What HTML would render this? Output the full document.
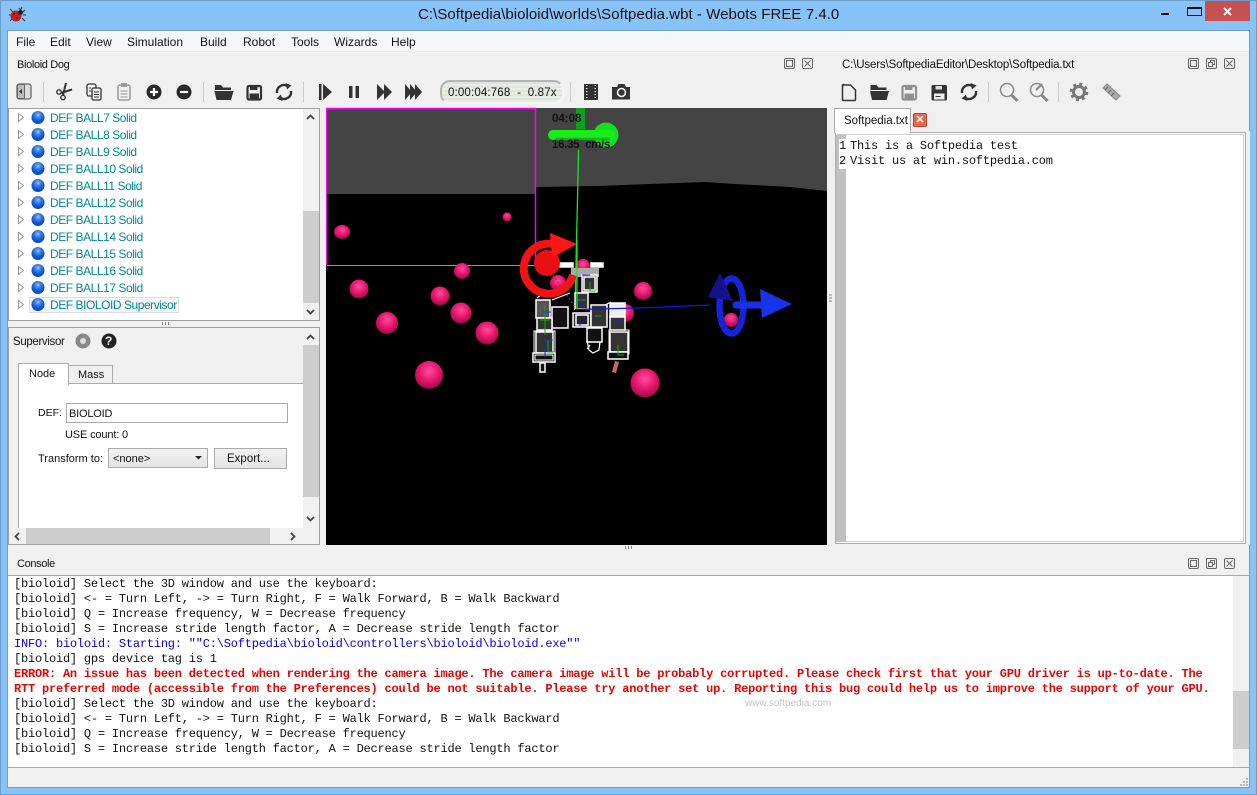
<!DOCTYPE html>
<html><head><meta charset="utf-8"><title>Webots</title>
<style>
html,body{margin:0;padding:0;background:#88c3f8;}
#w{position:relative;width:1257px;height:795px;overflow:hidden;background:#88c3f8;font-family:"Liberation Sans",sans-serif;font-size:12px;color:#111;}
.b{position:absolute;box-sizing:border-box;}
.t{position:absolute;white-space:nowrap;line-height:16px;height:16px;}
.tree{color:#00899a;letter-spacing:-.45px;}
.hd{font-size:11px;letter-spacing:-.35px;}
pre{margin:0;font-family:"Liberation Mono",monospace;font-size:12px;letter-spacing:-.21px;line-height:15px;position:absolute;white-space:pre;color:#111;}
svg{position:absolute;left:0;top:0;}
</style></head><body><div id="w">
<div class="b" style="left:0;top:0;width:1257px;height:795px;border:1px solid #6d9ecb;"></div>
<div class="b" style="left:7px;top:30px;width:1243px;height:758px;background:#f0f0f0;border:1px solid #6f9fcc;"></div>
<div class="b" style="left:8px;top:31px;width:1241px;height:21px;background:#f5f6f7;border-bottom:1px solid #e8e8e8;"></div>
<div class="b" style="left:1205px;top:1px;width:45px;height:20px;background:#c75050;"></div>
<div class="t" style="left:418px;top:7px;font-size:15px;letter-spacing:.05px;color:#111;">C:\Softpedia\bioloid\worlds\Softpedia.wbt - Webots FREE 7.4.0</div>

<div class="t" style="left:16px;top:34px;">File</div>
<div class="t" style="left:50px;top:34px;">Edit</div>
<div class="t" style="left:86px;top:34px;">View</div>
<div class="t" style="left:127px;top:34px;">Simulation</div>
<div class="t" style="left:200px;top:34px;">Build</div>
<div class="t" style="left:243px;top:34px;">Robot</div>
<div class="t" style="left:291px;top:34px;">Tools</div>
<div class="t" style="left:334px;top:34px;">Wizards</div>
<div class="t" style="left:391px;top:34px;">Help</div>

<div class="t hd" style="left:17px;top:57px;">Bioloid Dog</div>
<div class="t" style="left:842px;top:57px;font-size:11.5px;letter-spacing:-.15px;">C:\Users\SoftpediaEditor\Desktop\Softpedia.txt</div>
<div class="t hd" style="left:17px;top:556px;">Console</div>

<!-- tree -->
<div class="b" style="left:8px;top:108px;width:312px;height:213px;background:#fff;border:1px solid #a0a0a0;"></div>
<div class="b" style="left:303px;top:109px;width:16px;height:211px;background:#f0f0f0;"></div>
<div class="b" style="left:303px;top:211px;width:16px;height:92px;background:#cdcdcd;"></div>
<div class="b" style="left:29px;top:297px;width:150px;height:16px;background:#f6f6f6;border:1px solid #ddd;"></div>
<div class="t tree" style="left:50px;top:110px;">DEF BALL7 Solid</div>
<div class="t tree" style="left:50px;top:127px;">DEF BALL8 Solid</div>
<div class="t tree" style="left:50px;top:144px;">DEF BALL9 Solid</div>
<div class="t tree" style="left:50px;top:161px;">DEF BALL10 Solid</div>
<div class="t tree" style="left:50px;top:178px;">DEF BALL11 Solid</div>
<div class="t tree" style="left:50px;top:195px;">DEF BALL12 Solid</div>
<div class="t tree" style="left:50px;top:212px;">DEF BALL13 Solid</div>
<div class="t tree" style="left:50px;top:229px;">DEF BALL14 Solid</div>
<div class="t tree" style="left:50px;top:246px;">DEF BALL15 Solid</div>
<div class="t tree" style="left:50px;top:263px;">DEF BALL16 Solid</div>
<div class="t tree" style="left:50px;top:280px;">DEF BALL17 Solid</div>
<div class="t tree" style="left:50px;top:297px;">DEF BIOLOID Supervisor</div>

<!-- supervisor -->
<div class="b" style="left:8px;top:327px;width:312px;height:218px;background:#f0f0f0;border:1px solid #a0a0a0;"></div>
<div class="t" style="left:13px;top:334px;font-size:11.5px;letter-spacing:-.35px;">Supervisor</div>
<div class="b" style="left:18px;top:383px;width:285px;height:145px;background:#fff;border-left:1px solid #aaa;border-top:1px solid #aaa;"></div>
<div class="b" style="left:68px;top:365px;width:45px;height:19px;background:#f0f0f0;border:1px solid #aaa;"></div>
<div class="b" style="left:18px;top:363px;width:51px;height:22px;background:#fff;border:1px solid #aaa;border-bottom:none;"></div>
<div class="t" style="left:29px;top:366px;font-size:11px;">Node</div>
<div class="t" style="left:78px;top:367px;font-size:11px;">Mass</div>
<div class="t" style="left:38px;top:405px;font-size:10.5px;">DEF:</div>
<div class="b" style="left:66px;top:403px;width:222px;height:20px;background:#fff;border:1px solid #aaa;"></div>
<div class="t" style="left:69px;top:406px;font-size:11px;letter-spacing:-.2px;">BIOLOID</div>
<div class="t" style="left:65px;top:427px;font-size:11px;letter-spacing:-.15px;">USE count: 0</div>
<div class="t" style="left:38px;top:451px;font-size:11px;">Transform to:</div>
<div class="b" style="left:108px;top:448px;width:100px;height:20px;background:linear-gradient(#f2f2f2,#e4e4e4);border:1px solid #aaa;"></div>
<div class="t" style="left:113px;top:451px;font-size:11px;">&lt;none&gt;</div>
<div class="b" style="left:214px;top:448px;width:73px;height:21px;background:linear-gradient(#f2f2f2,#e4e4e4);border:1px solid #aaa;"></div>
<div class="t" style="left:227px;top:451px;font-size:11.5px;">Export...</div>
<div class="b" style="left:303px;top:328px;width:16px;height:200px;background:#f0f0f0;"></div>
<div class="b" style="left:303px;top:345px;width:16px;height:152px;background:#cdcdcd;"></div>
<div class="b" style="left:9px;top:528px;width:310px;height:16px;background:#f0f0f0;"></div>
<div class="b" style="left:26px;top:528px;width:244px;height:16px;background:#cdcdcd;"></div>

<!-- 3D view -->
<svg width="1257" height="795" viewBox="0 0 1257 795">
<defs>
<radialGradient id="p" cx=".5" cy=".36" r=".68"><stop offset="0" stop-color="#ff4f9c"/><stop offset=".5" stop-color="#e8176e"/><stop offset=".85" stop-color="#b00c50"/><stop offset="1" stop-color="#6a0a30"/></radialGradient>
<radialGradient id="bb" cx=".5" cy=".3" r=".75"><stop offset="0" stop-color="#9cc4f2"/><stop offset=".3" stop-color="#3d7fe0"/><stop offset=".65" stop-color="#0a56d8"/><stop offset="1" stop-color="#0a3fa8"/></radialGradient>
<g id="row"><path d="M18.500 -4v8l5-4z" fill="#fff" stroke="#999"/><circle cx="38" cy="0" r="6.500" fill="url(#bb)"/></g>
<g id="rel"><path d="M-7 1A7 7 0 0 1 3.500-6" fill="none" stroke="#333" stroke-width="2.400"/><path d="M1.500-9L7.500-6.500 3-2.500z" fill="#333"/><path d="M7-1A7 7 0 0 1-3.500 6" fill="none" stroke="#333" stroke-width="2.400"/><path d="M-1.500 9L-7.500 6.500-3 2.500z" fill="#333"/></g>
<g id="fold"><path d="M-9-7.500h6l2 2.500h8v2.500h-16z" fill="#333"/><path d="M-9.500-1.500h19l-2.500 9h-14.500z" fill="#333"/></g>
<g id="sv"><rect x="-6.500" y="-6.500" width="13.500" height="13.500" rx="1.500" fill="none" stroke="#333" stroke-width="2.200"/><path d="M-4-7h7.500v4.500h-7.500z" fill="#333"/><path d="M-4.500 1h9.500v6h-9.500z" fill="#333"/></g>
<g id="sv2"><rect x="-7.500" y="-7.500" width="15.500" height="15.500" rx="1.500" fill="#333"/><rect x="-3.500" y="-6.500" width="6.500" height="3.500" fill="#ddd"/><rect x="-5" y="1" width="10.500" height="6" fill="#eee"/><path d="M-3.500 4h5" stroke="#333"/></g>
<g id="d1"><rect x="-5" y="-5" width="10" height="10" rx="1.500" fill="none" stroke="#666"/><rect x="-3" y="-3" width="6" height="6" fill="none" stroke="#666"/></g>
<g id="d2"><rect x="-5" y="-5" width="10" height="10" rx="1.500" fill="none" stroke="#666"/><rect x="-1" y="-3" width="4" height="4" fill="none" stroke="#666"/><rect x="-3" y="-1" width="4" height="4" fill="#f0f0f0" stroke="#666"/></g>
<g id="d3"><rect x="-5" y="-5" width="10" height="10" rx="1.500" fill="none" stroke="#666"/><path d="M-3-3L3 3M3-3L-3 3" stroke="#666"/></g>
</defs>

<rect x="326" y="108" width="501" height="437" fill="#000"/>
<path d="M326 108H827V191L790 187 735 184 705 182 650 184 600 186 535 187V194H326Z" fill="#444"/>
<path d="M327 265.500H535" stroke="#d6d" stroke-width="1"/>
<path d="M326 108.500H535.500V265" fill="none" stroke="#f0f" stroke-width="1.500"/>
<path d="M326.500 108V265" stroke="#f0f" stroke-width="1"/>
<!-- balls -->
<g fill="url(#p)">
<ellipse cx="342" cy="232" rx="8" ry="7"/><circle cx="507" cy="217" r="4.500"/><circle cx="359" cy="289" r="9.500"/><circle cx="440" cy="296" r="9.500"/><circle cx="462" cy="271" r="8"/><circle cx="387" cy="323" r="11"/><circle cx="461" cy="313" r="10.500"/><circle cx="487" cy="333" r="11.500"/><circle cx="429" cy="375" r="14"/><circle cx="645" cy="383" r="14.500"/><circle cx="643" cy="291" r="9"/><circle cx="731" cy="320" r="7"/><circle cx="558" cy="283" r="8"/><circle cx="583" cy="266" r="7"/><circle cx="625" cy="313" r="9"/>
</g>
<!-- green -->
<path d="M578.500 150L577.500 200 576.500 240 575 310" fill="none" stroke="#19e619" stroke-width="1.300"/>
<rect x="576" y="108" width="9" height="21" fill="#0fa01f"/>
<circle cx="606" cy="135" r="12.500" fill="#14e01e"/>
<path d="M553 135H610" stroke="#17ee17" stroke-width="10" stroke-linecap="round"/>
<path d="M556 139H610" stroke="#12b41e" stroke-width="2.500"/>
<!-- robot -->
<rect x="571" y="268" width="28" height="9" fill="#aaa"/>
<g fill="#333" stroke="#fff" stroke-width="1.500">
<rect x="560" y="263" width="13" height="4" fill="#fff"/><rect x="591" y="263" width="12" height="4" fill="#fff"/>
<rect x="582" y="275" width="15" height="17"/><rect x="584" y="277" width="11" height="13" fill="none"/>
<rect x="575" y="293" width="13" height="16"/>
<rect x="552" y="307" width="16" height="21" fill="#111"/><rect x="573" y="313" width="18" height="14"/><rect x="576" y="315" width="12" height="10" fill="#222"/>
<rect x="591" y="305" width="16" height="22"/><rect x="610" y="303" width="15" height="14" fill="#eee"/><rect x="610" y="317" width="15" height="13"/>
<rect x="536" y="300" width="14" height="18" fill="#555"/><rect x="537" y="318" width="15" height="12"/><rect x="536" y="332" width="17" height="21"/><rect x="534" y="331" width="21" height="24" fill="none" stroke-width="1"/><rect x="533" y="353" width="22" height="9" fill="#111"/><rect x="535" y="355" width="18" height="5" fill="none" stroke-width="1"/><rect x="540" y="363" width="5" height="9" fill="#111"/>
<rect x="610" y="332" width="18" height="20"/><rect x="609" y="330" width="20" height="24" fill="none" stroke-width="1"/><rect x="608" y="352" width="20" height="7" fill="#111"/>
<rect x="587" y="328" width="15" height="14" fill="#111"/>
</g>
<path d="M587 340l2 10 4 3 6-3 1-8M605 305l6-3M537 298l5-4 6 3M552 300l18-7M590 345l-3 4" stroke="#fff" stroke-width="1.200" fill="none"/>
<path d="M612 372l3-11 4 1-3 11z" fill="#c66"/>
<path d="M553 275l22 32" stroke="#e11" stroke-width="1" stroke-dasharray="2 2"/>
<path d="M545 305v30M540 320h10M548 340v12h6M590 282v9h5M578 300h8M595 316h6M618 345v10h6" stroke="#1a1" stroke-width="1" fill="none"/>
<path d="M543 312h8M543 340h10M582 275h8M581 298v8M580 318v8M613 320h8M545 345v12" stroke="#22e" stroke-width="1" fill="none"/>
<!-- red gizmo -->
<path d="M573 275A25 25 0 1 1 553 244" fill="none" stroke="#f01414" stroke-width="8"/>
<circle cx="547" cy="263" r="13" fill="#e81010"/>
<path d="M550 233L577 244 552 258Z" fill="#ff1616"/>
<path d="M577 240V310" stroke="#19e619" stroke-width="1.300"/>
<!-- blue gizmo -->
<path d="M575 309.500L640 308 710 305" stroke="#1414e0" stroke-width="1.300" fill="none"/>
<ellipse cx="731.500" cy="306" rx="12" ry="27.500" fill="none" stroke="#1424d8" stroke-width="6.500"/>
<path d="M720 273L708 297 733 301Z" fill="#12128c"/>
<path d="M736 305H766" stroke="#1a32e6" stroke-width="7" stroke-linecap="round"/>
<path d="M760 289L792 304 762 318Z" fill="#1a32ea"/>

<!-- window controls -->
<rect x="1161" y="13" width="8" height="2" fill="#111"/>
<rect x="1187.500" y="7.500" width="14" height="8" fill="none" stroke="#111" stroke-width="1"/><rect x="1187" y="7" width="15" height="2" fill="#111"/>
<path d="M1224 8l7 7M1231 8l-7 7" stroke="#fff" stroke-width="2"/>
<!-- bug -->
<path d="M10 9l3 3M10 21l3-3M25 10l-3 3M25 21l-3-3M9 15h3M26 15h-3M19 8l2 3M22 7l-2 4" stroke="#333" stroke-width="1"/>
<ellipse cx="16" cy="16" rx="5.500" ry="5.500" fill="#c8201a"/><circle cx="20.500" cy="12.500" r="2.500" fill="#222"/><circle cx="14" cy="14" r="1" fill="#222"/><circle cx="17" cy="18" r="1" fill="#222"/>

<!-- dock buttons -->
<use href="#d1" x="789.500" y="63.500"/><use href="#d3" x="807.500" y="63.500"/>
<use href="#d1" x="1193.500" y="63.500"/><use href="#d2" x="1211.500" y="63.500"/><use href="#d3" x="1229.500" y="63.500"/>
<use href="#d1" x="1193.500" y="563.500"/><use href="#d2" x="1211.500" y="563.500"/><use href="#d3" x="1229.500" y="563.500"/>

<!-- separators -->
<g stroke="#ccc"><path d="M43.500 82v20M203.500 82v20M303.500 82v20M570.500 82v20M988.500 82v20M1058.500 82v20"/></g>

<!-- left toolbar -->
<rect x="17" y="84" width="14" height="15" rx="2.500" fill="#ddd" stroke="#666" stroke-width="1.300"/><rect x="17.500" y="84.500" width="7" height="14" fill="#bbb" stroke="#666"/><path d="M22 89v5l-3-2.500z" fill="#333"/>
<g fill="none" stroke="#333" stroke-width="1.400"><circle cx="59" cy="92" r="2.200"/><circle cx="63" cy="97.500" r="2.200"/></g><path d="M61 93L72 89.500" stroke="#333" stroke-width="2.200"/><path d="M63 95L66 83" stroke="#333" stroke-width="2"/>
<g fill="#f0f0f0" stroke="#333" stroke-width="1.300"><rect x="87" y="84" width="9" height="12" rx="2"/><rect x="92" y="88" width="9" height="12" rx="1.500"/></g><path d="M94 92h5M94 94.500h5M94 97h5M89 88h2M89 91h2" stroke="#333"/>
<rect x="118" y="85" width="12" height="15" rx="2" fill="none" stroke="#999" stroke-width="1.500"/><rect x="121" y="83" width="6" height="4" fill="#999"/><path d="M120.500 91h7M120.500 94h7M120.500 97h7" stroke="#999"/>
<circle cx="154" cy="92" r="7.500" fill="#2a2a2a"/><path d="M150 92h8M154 88v8" stroke="#fff" stroke-width="2.200"/>
<circle cx="184" cy="92" r="7.500" fill="#2a2a2a"/><path d="M180 92h8" stroke="#fff" stroke-width="2.200"/>
<use href="#fold" x="224" y="92.500"/>
<use href="#sv" x="254" y="92.500"/>
<use href="#rel" x="284" y="92"/>
<rect x="319" y="84" width="2.500" height="16" fill="#333"/><path d="M323 84l9 8-9 8z" fill="#333"/>
<rect x="349" y="86" width="3.500" height="12" fill="#333"/><rect x="355.500" y="86" width="3.500" height="12" fill="#333"/>
<path d="M377 84l8 8-8 8zM384 84l8 8-8 8z" fill="#333"/>
<path d="M405 84l7 8-7 8zM410 84l7 8-7 8zM415 84l7 8-7 8z" fill="#333"/>
<path d="M584 84h14v16h-14z" fill="#333"/><path d="M586 85.500h1.500M586 88.500h1.500M586 91.500h1.500M586 94.500h1.500M586 97.500h1.500M594.500 85.500h1.500M594.500 88.500h1.500M594.500 91.500h1.500M594.500 94.500h1.500M594.500 97.500h1.500" stroke="#eee"/>
<path d="M612 87h5l1.500-3h6l1.500 3h4v12.500h-18z" fill="#333"/><circle cx="621.500" cy="92.500" r="4" fill="none" stroke="#fff" stroke-width="1.500"/>

<!-- right toolbar -->
<path d="M843.500 85h7l5 5v9.500q0 1-1 1h-11q-1 0-1-1v-14q0-1 1-1z" fill="none" stroke="#333" stroke-width="1.500"/>
<use href="#fold" x="879.500" y="92.500"/>
<g opacity=".5"><use href="#sv" x="909" y="92.500"/></g>
<use href="#sv2" x="939" y="92.500"/>
<use href="#rel" x="969" y="92"/>
<g fill="none" stroke="#888"><circle cx="1007" cy="90" r="6.500" stroke-width="1.500"/><path d="M1011.500 95l6 6" stroke-width="3"/><circle cx="1037" cy="90" r="6.500" stroke-width="1.500"/><path d="M1041.500 95l6 6" stroke-width="3"/><path d="M1042 84l-6 6" stroke-width="2"/></g>
<circle cx="1079" cy="92" r="5.500" fill="none" stroke="#777" stroke-width="3"/><circle cx="1079" cy="92" r="8" fill="none" stroke="#777" stroke-width="2.500" stroke-dasharray="3 3.280"/>
<path d="M1103 88l4-4 13 12-4 4z" fill="#aaa" stroke="#888"/><path d="M1105 90l3-3M1108 93l3-3M1111 96l3-3" stroke="#666"/>

<!-- tree rows -->
<use href="#row" y="117.500"/><use href="#row" y="134.500"/><use href="#row" y="151.500"/><use href="#row" y="168.500"/><use href="#row" y="185.500"/><use href="#row" y="202.500"/><use href="#row" y="219.500"/><use href="#row" y="236.500"/><use href="#row" y="253.500"/><use href="#row" y="270.500"/><use href="#row" y="287.500"/><use href="#row" y="304.500"/>

<!-- scroll arrows -->
<g fill="none" stroke="#444" stroke-width="1.800">
<path d="M307 119l3.500-3.500 3.500 3.500M307 310l3.500 3.500 3.500-3.500"/>
<path d="M307 339l3.500-3.500 3.500 3.500M307 517l3.500 3.500 3.500-3.500"/>
<path d="M19 533l-3.500 3.500 3.500 3.500M291 533l3.500 3.500-3.500 3.500"/>
<path d="M1237 589l3.500-3.500 3.500 3.500M1237 757l3.500 3.500 3.500-3.500"/>
</g>
<!-- supervisor icons -->
<circle cx="83" cy="341" r="7.500" fill="#888"/><circle cx="83" cy="341" r="3" fill="#ddd"/>
<circle cx="109" cy="341" r="7.500" fill="#222"/>
<path d="M195 456h7l-3.500 3.500z" fill="#222"/>
<!-- splitters -->
<path d="M162.500 322v3M165.500 322v3M168.500 322v3M625.500 546v3M628.500 546v3M631.500 546v3M829 295h3M829 298h3M829 301h3" stroke="#888"/>
<!-- grip -->
<g fill="#bbb"><rect x="1246" y="778" width="2" height="2"/><rect x="1243" y="781" width="2" height="2"/><rect x="1246" y="781" width="2" height="2"/><rect x="1240" y="784" width="2" height="2"/><rect x="1243" y="784" width="2" height="2"/><rect x="1246" y="784" width="2" height="2"/></g>
</svg>
<div class="t" style="left:105px;top:333px;color:#fff;font-weight:bold;font-size:12px;">?</div>

<div class="t" style="left:552px;top:111px;font-weight:bold;font-size:11.5px;color:#111;">04:08</div>
<div class="t" style="left:552px;top:137px;font-weight:bold;font-size:11.5px;letter-spacing:-.3px;color:#111;white-space:pre;">16.35  cm/s</div>

<!-- timer -->
<div class="b" style="left:440px;top:80px;width:124px;height:24px;border-radius:10px;border:2px solid #b4b4b4;border-right-color:#f4f4f4;border-bottom-color:#f4f4f4;background:repeating-linear-gradient(#dfe5da 0 2px,#e9ede5 2px 4px);"></div>
<div class="t" style="left:448px;top:85px;font-size:11.5px;letter-spacing:.15px;white-space:pre;">0:00:04:768  -  0.87x</div>

<!-- editor -->
<div class="b" style="left:834px;top:131px;width:416px;height:414px;background:#f0f0f0;"></div>
<div class="b" style="left:835px;top:132px;width:411px;height:412px;background:#fff;border:1px solid #aaa;outline:1px solid #ccc;outline-offset:-3px;"></div>
<div class="b" style="left:836px;top:135px;width:10px;height:407px;background:#c0c0c0;"></div>
<div class="b" style="left:839px;top:139px;width:7px;height:30px;background:#fff;"></div>
<div class="b" style="left:834px;top:108px;width:77px;height:25px;background:#fff;border:1px solid #aaa;border-bottom:none;"></div>
<div class="t" style="left:844px;top:113px;font-size:11.5px;">Softpedia.txt</div>
<div class="b" style="left:913px;top:113px;width:14px;height:14px;background:#e8664a;border:1px solid #c04428;border-radius:2px;color:#fff;font:bold 11px/12px 'Liberation Sans',sans-serif;text-align:center;">✕</div>
<pre style="left:839px;top:139px;">1
2</pre>
<pre style="left:850px;top:139px;">This is a Softpedia test
Visit us at win.softpedia.com</pre>

<!-- console -->
<div class="b" style="left:8px;top:575px;width:1241px;height:193px;background:#fff;border-top:1px solid #a8a8a8;border-bottom:1px solid #a8a8a8;"></div>
<div class="b" style="left:1233px;top:576px;width:16px;height:191px;background:#f0f0f0;"></div>
<div class="b" style="left:1233px;top:691px;width:16px;height:58px;background:#cdcdcd;"></div>
<div class="t" style="left:728px;top:680px;font-size:22px;letter-spacing:2px;color:#f2f2f2;">SOFTPEDIA</div>
<div class="t" style="left:745px;top:696px;font-size:10px;color:#c4c4c4;">www.softpedia.com</div>
<pre style="left:14px;top:577px;">[bioloid] Select the 3D window and use the keyboard:
[bioloid] &lt;- = Turn Left, -&gt; = Turn Right, F = Walk Forward, B = Walk Backward
[bioloid] Q = Increase frequency, W = Decrease frequency
[bioloid] S = Increase stride length factor, A = Decrease stride length factor
<span style="color:#0000f0">INFO: bioloid: Starting: ""C:\Softpedia\bioloid\controllers\bioloid\bioloid.exe""</span>
[bioloid] gps device tag is 1
<span style="color:#f00000;font-weight:bold">ERROR: An issue has been detected when rendering the camera image. The camera image will be probably corrupted. Please check first that your GPU driver is up-to-date. The</span>
<span style="color:#f00000;font-weight:bold">RTT preferred mode (accessible from the Preferences) could be not suitable. Please try another set up. Reporting this bug could help us to improve the support of your GPU.</span>
[bioloid] Select the 3D window and use the keyboard:
[bioloid] &lt;- = Turn Left, -&gt; = Turn Right, F = Walk Forward, B = Walk Backward
[bioloid] Q = Increase frequency, W = Decrease frequency
[bioloid] S = Increase stride length factor, A = Decrease stride length factor</pre>
</div></body></html>
